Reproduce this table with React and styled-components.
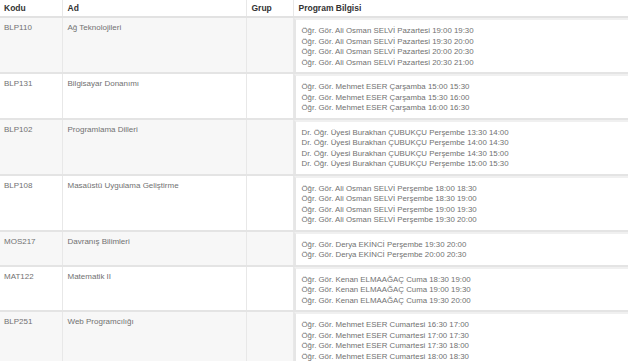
import styled, { createGlobalStyle } from 'styled-components'

const GlobalStyle = createGlobalStyle`
    body{
        margin: 0;
        background: #fff;
        font-family: "Liberation Sans", Arial, sans-serif;
    }
`

const courses = [
    { code: 'BLP110', name: 'Ağ Teknolojileri', lines: [
        'Öğr. Gör. Ali Osman SELVİ Pazartesi 19:00 19:30',
        'Öğr. Gör. Ali Osman SELVİ Pazartesi 19:30 20:00',
        'Öğr. Gör. Ali Osman SELVİ Pazartesi 20:00 20:30',
        'Öğr. Gör. Ali Osman SELVİ Pazartesi 20:30 21:00',
    ] },
    { code: 'BLP131', name: 'Bilgisayar Donanımı', lines: [
        'Öğr. Gör. Mehmet ESER Çarşamba 15:00 15:30',
        'Öğr. Gör. Mehmet ESER Çarşamba 15:30 16:00',
        'Öğr. Gör. Mehmet ESER Çarşamba 16:00 16:30',
    ] },
    { code: 'BLP102', name: 'Programlama Dilleri', lines: [
        'Dr. Öğr. Üyesi Burakhan ÇUBUKÇU Perşembe 13:30 14:00',
        'Dr. Öğr. Üyesi Burakhan ÇUBUKÇU Perşembe 14:00 14:30',
        'Dr. Öğr. Üyesi Burakhan ÇUBUKÇU Perşembe 14:30 15:00',
        'Dr. Öğr. Üyesi Burakhan ÇUBUKÇU Perşembe 15:00 15:30',
    ] },
    { code: 'BLP108', name: 'Masaüstü Uygulama Geliştirme', lines: [
        'Öğr. Gör. Ali Osman SELVİ Perşembe 18:00 18:30',
        'Öğr. Gör. Ali Osman SELVİ Perşembe 18:30 19:00',
        'Öğr. Gör. Ali Osman SELVİ Perşembe 19:00 19:30',
        'Öğr. Gör. Ali Osman SELVİ Perşembe 19:30 20:00',
    ] },
    { code: 'MOS217', name: 'Davranış Bilimleri', lines: [
        'Öğr. Gör. Derya EKİNCİ Perşembe 19:30 20:00',
        'Öğr. Gör. Derya EKİNCİ Perşembe 20:00 20:30',
    ] },
    { code: 'MAT122', name: 'Matematik II', lines: [
        'Öğr. Gör. Kenan ELMAAĞAÇ Cuma 18:30 19:00',
        'Öğr. Gör. Kenan ELMAAĞAÇ Cuma 19:00 19:30',
        'Öğr. Gör. Kenan ELMAAĞAÇ Cuma 19:30 20:00',
    ] },
    { code: 'BLP251', name: 'Web Programcılığı', lines: [
        'Öğr. Gör. Mehmet ESER Cumartesi 16:30 17:00',
        'Öğr. Gör. Mehmet ESER Cumartesi 17:00 17:30',
        'Öğr. Gör. Mehmet ESER Cumartesi 17:30 18:00',
        'Öğr. Gör. Mehmet ESER Cumartesi 18:00 18:30',
    ] },
]

const Table = styled.table`
    width: 628px;
    border-collapse: collapse;
    table-layout: fixed;
    font-size: 8px;
    color: #717171;
`

const Col = styled.col`
    width: ${p => p.$w};
`

const Th = styled.th`
    text-align: left;
    font-weight: 600;
    color: #333;
    font-size: 8.5px;
    line-height: 10px;
    padding: 3px 5px 3px;
    border-bottom: 2px solid #e2e2e2;
    border-left: 1px solid #e8e8e8;
    &:first-child{ border-left: none; padding-left: 4px; }
`

const Row = styled.tr`
    background: ${p => p.$odd ? '#f7f7f7' : '#fff'};
    border-bottom: 2px solid #e4e4e4;
`

const Td = styled.td`
    vertical-align: top;
    padding: 5px 5px 5px;
    line-height: 10.5px;
    border-left: 1px solid #e8e8e8;
    &:first-child{ border-left: none; padding-left: 4px; }
`

const ProgramTd = styled(Td)`
    padding: 0;
`

const ProgramBox = styled.div`
    background: #fff;
    border-left: 2px solid #e6e6e6;
    border-top: 2px solid #f0f0f0;
    padding: 6px 6px 4px;
    font-size: 7.85px;
    line-height: 10.5px;
`

function App() {
    return (
        <>
            <GlobalStyle />
            <Table>
                <colgroup>
                    <Col $w='62px' />
                    <Col $w='184px' />
                    <Col $w='47px' />
                    <Col $w='335px' />
                </colgroup>
                <thead>
                    <tr>
                        <Th>Kodu</Th>
                        <Th>Ad</Th>
                        <Th>Grup</Th>
                        <Th>Program Bilgisi</Th>
                    </tr>
                </thead>
                <tbody>
                    {courses.map((c, i) => (
                        <Row key={c.code} $odd={i % 2 === 0}>
                            <Td>{c.code}</Td>
                            <Td>{c.name}</Td>
                            <Td></Td>
                            <ProgramTd>
                                <ProgramBox>
                                    {c.lines.map(l => <div key={l}>{l}</div>)}
                                </ProgramBox>
                            </ProgramTd>
                        </Row>
                    ))}
                </tbody>
            </Table>
        </>
    )
}

export default App
